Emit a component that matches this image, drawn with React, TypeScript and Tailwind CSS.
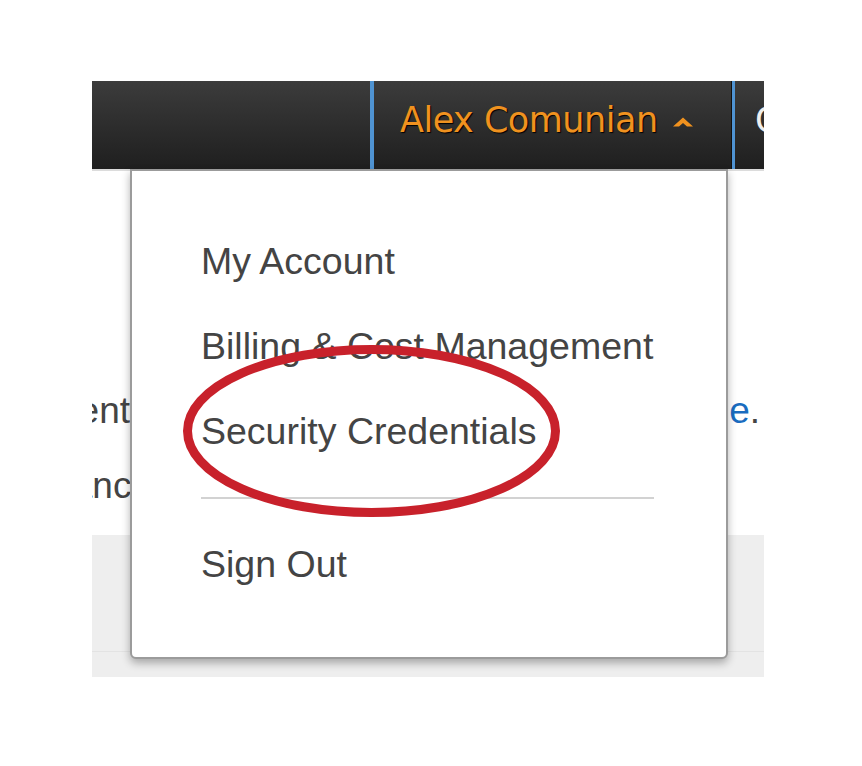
const menuItems = ['My Account', 'Billing & Cost Management', 'Security Credentials']

export default function App() {
  return (
    <div className="relative min-h-screen bg-white pl-[92px] pt-[81px] font-['Liberation_Sans',Arial,sans-serif]">
      {/* Console crop */}
      <div className="relative h-[596px] w-[672px] overflow-hidden">
        {/* Top nav bar */}
        <div className="flex h-[88px] bg-gradient-to-b from-[#3c3c3c] to-[#1f1f1f]">
          <div className="w-[278px] shrink-0" />
          <div className="w-[4px] shrink-0 bg-[#4f93d2]" />
          <div className="flex w-[357px] shrink-0 items-center pb-[9px] pl-[26px] whitespace-nowrap">
            <span className="font-['DejaVu_Sans',Verdana,sans-serif] text-[35px] tracking-[-0.5px] text-[#f0921f] [text-shadow:1px_1px_1px_#000]">
              Alex Comunian
            </span>
            <svg width="20" height="10" viewBox="0 0 20 10" className="ml-[15px] mt-[2px] shrink-0">
              <polygon points="0,9.5 10,0.5 20,9.5 14,9.5 10,6 6,9.5" fill="#f0921f" />
            </svg>
          </div>
          <div className="w-px shrink-0 bg-[#111]" />
          <div className="w-[3px] shrink-0 bg-[#4f93d2]" />
          <div className="flex min-w-0 flex-1 items-center overflow-hidden pb-[9px] pl-[20px] whitespace-nowrap">
            <span className="font-['DejaVu_Sans',Verdana,sans-serif] text-[35px] text-[#eeeeee]">Global</span>
          </div>
        </div>

        {/* Page content behind the dropdown */}
        <div className="h-[366px] border-t-2 border-[#dcdcdc] text-[37px] text-[#444]">
          <div className="mt-[202px] flex h-[75px] items-center justify-between leading-[75px]">
            <div className="flex w-[38px] shrink-0 justify-end overflow-hidden whitespace-nowrap">ment</div>
            <div className="pr-[4px] whitespace-nowrap">
              <span className="text-[#1a6cbf]">e</span>.
            </div>
          </div>
          <div className="flex h-[75px] items-center leading-[75px]">
            <div className="flex w-[60px] shrink-0 justify-end overflow-hidden whitespace-nowrap">ance</div>
          </div>
        </div>
        <div className="h-[142px] bg-[#eeeeee]">
          <div className="h-[117px] border-b border-[#e3e3e3]" />
        </div>

        {/* Dropdown menu */}
        <div className="absolute left-[38px] top-[88px] h-[490px] w-[598px] rounded-b-[6px] border-2 border-[#9b9b9b] bg-white pl-[69px] pt-[48px] text-[37.5px] text-[#444] shadow-[0_4px_8px_rgba(0,0,0,0.3)]">
          {menuItems.map(item => (
            <div key={item} className="h-[85px] leading-[85px] whitespace-nowrap">
              {item}
            </div>
          ))}
          <div className="my-[23px] h-[2px] w-[453px] bg-[#d2d2d2]" />
          <div className="h-[85px] leading-[85px]">Sign Out</div>
        </div>
      </div>

      {/* Red annotation ellipse */}
      <svg className="pointer-events-none absolute inset-0" width="862" height="766">
        <ellipse cx="371.5" cy="431" rx="184" ry="81.5" fill="none" stroke="#c8212b" strokeWidth="9" />
      </svg>
    </div>
  )
}
